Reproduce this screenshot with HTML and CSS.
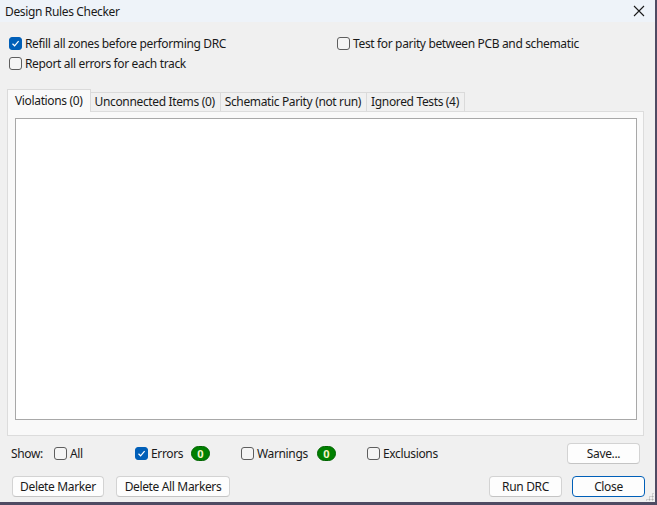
FILE: index.html
```html
<!DOCTYPE html>
<html>
<head>
<meta charset="utf-8">
<link rel="stylesheet" href="styles.css">
</head>
<body>
<div class="desktop">
  <div class="window">
    <div class="titlebar">
      <span class="title">Design Rules Checker</span>
      <svg class="close-x" width="12" height="12" viewBox="0 0 12 12"><path d="M1 1 L11 11 M11 1 L1 11" stroke="#1a1a1a" stroke-width="1.1" fill="none"/></svg>
    </div>
    <div class="options">
      <label class="check"><span class="box checked"><svg width="9" height="9" viewBox="0 0 9 9"><path d="M1.5 4.8 L3.6 6.8 L7.6 2.2" stroke="#fff" stroke-width="1.2" fill="none"/></svg></span>Refill all zones before performing DRC</label>
      <label class="check"><span class="box"></span>Test for parity between PCB and schematic</label>
      <label class="check"><span class="box"></span>Report all errors for each track</label>
    </div>
    <div class="tabs">
      <div class="tab active">Violations (0)</div>
      <div class="tab">Unconnected Items (0)</div>
      <div class="tab">Schematic Parity (not run)</div>
      <div class="tab">Ignored Tests (4)</div>
    </div>
    <div class="panel">
      <div class="listbox"></div>
    </div>
    <div class="show-row">
      <span class="show-label">Show:</span>
      <label class="check c-all"><span class="box"></span>All</label>
      <label class="check c-errors"><span class="box checked"><svg width="9" height="9" viewBox="0 0 9 9"><path d="M1.5 4.8 L3.6 6.8 L7.6 2.2" stroke="#fff" stroke-width="1.2" fill="none"/></svg></span>Errors</label>
      <span class="badge b-errors">0</span>
      <label class="check c-warn"><span class="box"></span>Warnings</label>
      <span class="badge b-warn">0</span>
      <label class="check c-excl"><span class="box"></span>Exclusions</label>
      <button class="btn save">Save...</button>
    </div>
    <div class="button-row">
      <button class="btn del-marker">Delete Marker</button>
      <button class="btn del-all">Delete All Markers</button>
      <span class="spacer"></span>
      <button class="btn run">Run DRC</button>
      <button class="btn close default">Close</button>
    </div>
    <div class="grip"></div>
  </div>
</div>
</body>
</html>
```
FILE: styles.css
```css
* { box-sizing: border-box; }
html, body { margin: 0; padding: 0; }
body {
  width: 657px;
  height: 505px;
  overflow: hidden;
  font-family: "Noto Sans", "Liberation Sans", sans-serif;
  font-size: 12px;
  letter-spacing: -0.35px;
  color: #1a1a1a;
}
.desktop {
  width: 657px;
  height: 505px;
  background: #4f4b63;
}
.window {
  position: relative;
  width: 655px;
  height: 502px;
  background: #f0f0f0;
  display: flex;
  flex-direction: column;
}
.titlebar {
  height: 22px;
  background: #eef3f9;
  display: flex;
  align-items: center;
  justify-content: space-between;
  padding: 0 10px 0 5px;
}
.title { font-size: 12px; color: #1a1a1a; }
.close-x { display: block; }

.options {
  display: grid;
  grid-template-columns: 328px auto;
  grid-auto-rows: 20px;
  padding: 11px 0 0 9px;
}
.check {
  display: flex;
  align-items: center;
  white-space: nowrap;
}
.box {
  width: 13px;
  height: 13px;
  border: 1px solid #5e5e5e;
  border-radius: 3px;
  background: #f5f5f5;
  margin-right: 3px;
  display: flex;
  align-items: center;
  justify-content: center;
  flex: none;
}
.box.checked {
  background: #005fb8;
  border-color: #005fb8;
}
.box svg { display: block; }

.tabs {
  display: flex;
  align-items: flex-end;
  margin: 16px 0 0 7px;
  height: 22px;
  position: relative;
  z-index: 1;
}
.tab {
  height: 19px;
  padding: 0 5px 0 4px;
  border: 1px solid #dadada;
  border-bottom: none;
  border-left: none;
  background: #f0f0f0;
  display: flex;
  align-items: center;
  padding-bottom: 1px;
  white-space: nowrap;
}
.tab.active {
  height: 23px;
  margin-bottom: -1px;
  padding: 0 7px 2px 7px;
  border-left: 1px solid #dadada;
  background: #f9f9f9;
}
.panel {
  margin: 0 11px 0 7px;
  height: 325px;
  border: 1px solid #dcdcdc;
  background: #f9f9f9;
  padding: 6px 6px 15px 7px;
}
.listbox {
  height: 302px;
  background: #ffffff;
  border: 1px solid #a8a8a8;
}

.show-row {
  display: flex;
  align-items: center;
  height: 21px;
  margin-top: 7px;
  padding-left: 11px;
}
.show-label { width: 43px; }
.c-all { width: 81px; }
.c-errors { width: 56px; }
.badge {
  width: 19px;
  height: 15px;
  border-radius: 8px;
  background: #008000;
  border: 1px solid #006400;
  color: #f4f4c8;
  font-weight: bold;
  font-size: 11px;
  letter-spacing: 0;
  display: flex;
  align-items: center;
  justify-content: center;
  line-height: 1;
}
.b-errors { margin-right: 31px; }
.c-warn { width: 76px; }
.b-warn { margin-right: 31px; }
.c-excl { flex: 1; }

.btn {
  font-family: inherit;
  font-size: 12px;
  letter-spacing: inherit;
  color: #1a1a1a;
  height: 21px;
  background: #fdfdfd;
  border: 1px solid #d3d3d3;
  border-bottom-color: #c4c4c4;
  border-radius: 4px;
  padding: 0;
  display: flex;
  align-items: center;
  justify-content: center;
}
.save { width: 73px; margin-right: 15px; }

.button-row {
  display: flex;
  align-items: center;
  margin-top: 12px;
  padding-left: 12px;
}
.del-marker { width: 92px; margin-right: 12px; }
.del-all { width: 114px; }
.spacer { flex: 1; }
.run { width: 73px; margin-right: 10px; }
.close { width: 73px; margin-right: 10px; }
.btn.default { border: 1px solid #005fb8; }

.grip {
  position: absolute;
  right: 1px;
  bottom: 1px;
  width: 9px;
  height: 9px;
  background-image: radial-gradient(circle, #b0b0b0 0.9px, transparent 1.1px);
  background-size: 3px 3px;
  clip-path: polygon(100% 0, 100% 100%, 0 100%);
}
```
